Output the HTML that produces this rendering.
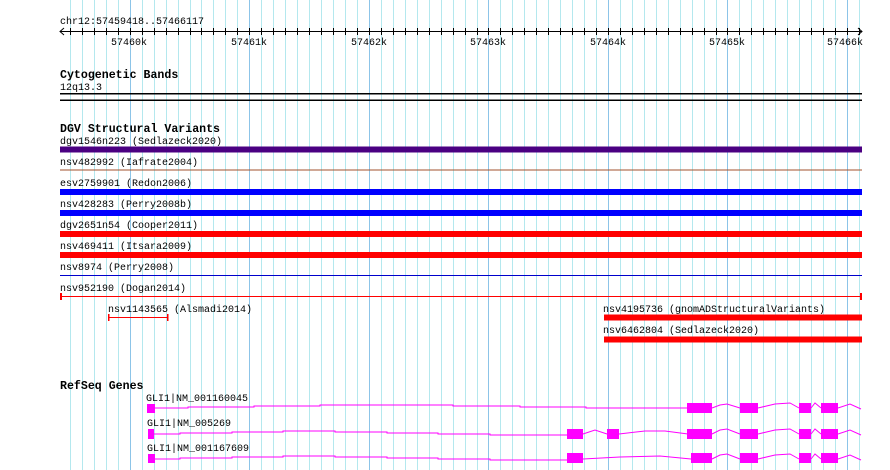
<!DOCTYPE html>
<html><head><meta charset="utf-8"><style>
html,body{margin:0;padding:0;background:#fff;width:890px;height:470px;overflow:hidden}
svg{display:block;position:absolute;left:0;top:0}
text{font-family:"Liberation Mono","DejaVu Sans Mono",monospace;font-size:10px;fill:#000}
.b{font-weight:bold;font-size:11.6px}
</style></head><body>
<svg width="890" height="470" xmlns="http://www.w3.org/2000/svg">
<g stroke="#b4e8ee" stroke-width="1">
<path d="M70.5 0V470M82.5 0V470M94.5 0V470M106.5 0V470M118.5 0V470
M142.5 0V470M154.5 0V470M166.5 0V470M178.5 0V470M190.5 0V470M201.5 0V470M213.5 0V470M225.5 0V470M237.5 0V470
M261.5 0V470M273.5 0V470M285.5 0V470M297.5 0V470M309.5 0V470M321.5 0V470M333.5 0V470M345.5 0V470M357.5 0V470
M381.5 0V470M393.5 0V470M405.5 0V470M417.5 0V470M429.5 0V470M441.5 0V470M453.5 0V470M465.5 0V470M477.5 0V470
M500.5 0V470M512.5 0V470M524.5 0V470M536.5 0V470M548.5 0V470M560.5 0V470M572.5 0V470M584.5 0V470M596.5 0V470
M620.5 0V470M632.5 0V470M644.5 0V470M656.5 0V470M668.5 0V470M680.5 0V470M692.5 0V470M704.5 0V470M716.5 0V470
M739.5 0V470M751.5 0V470M763.5 0V470M775.5 0V470M787.5 0V470M799.5 0V470M811.5 0V470M823.5 0V470M835.5 0V470
M859.5 0V470"/>
</g>
<g stroke="#8cc4e8" stroke-width="1">
<path d="M130.5 0V470M249.5 0V470M369.5 0V470M488.5 0V470M608.5 0V470M727.5 0V470M847.5 0V470"/>
</g>

<text x="60" y="24">chr12:57459418..57466117</text>
<line x1="60" y1="31.5" x2="862" y2="31.5" stroke="#000"/>
<polyline points="64,28 60,31.5 64,35" fill="none" stroke="#000"/>
<polyline points="858,28 862,31.5 858,35" fill="none" stroke="#000"/>
<g stroke="#000">
<path d="M70.5 28V35M82.5 28V35M94.5 28V35M106.5 28V35M118.5 28V35
M130.5 28V35M142.5 28V35M154.5 28V35M166.5 28V35M178.5 28V35M190.5 28V35M201.5 28V35M213.5 28V35M225.5 28V35M237.5 28V35
M249.5 28V35M261.5 28V35M273.5 28V35M285.5 28V35M297.5 28V35M309.5 28V35M321.5 28V35M333.5 28V35M345.5 28V35M357.5 28V35
M369.5 28V35M381.5 28V35M393.5 28V35M405.5 28V35M417.5 28V35M429.5 28V35M441.5 28V35M453.5 28V35M465.5 28V35M477.5 28V35
M488.5 28V35M500.5 28V35M512.5 28V35M524.5 28V35M536.5 28V35M548.5 28V35M560.5 28V35M572.5 28V35M584.5 28V35M596.5 28V35
M608.5 28V35M620.5 28V35M632.5 28V35M644.5 28V35M656.5 28V35M668.5 28V35M680.5 28V35M692.5 28V35M704.5 28V35M716.5 28V35
M727.5 28V35M739.5 28V35M751.5 28V35M763.5 28V35M775.5 28V35M787.5 28V35M799.5 28V35M811.5 28V35M823.5 28V35M835.5 28V35
M847.5 28V35M859.5 28V35"/>
</g>
<text x="129" y="45" text-anchor="middle">57460k</text>
<text x="249" y="45" text-anchor="middle">57461k</text>
<text x="369" y="45" text-anchor="middle">57462k</text>
<text x="488" y="45" text-anchor="middle">57463k</text>
<text x="608" y="45" text-anchor="middle">57464k</text>
<text x="727" y="45" text-anchor="middle">57465k</text>
<text x="845" y="45" text-anchor="middle">57466k</text>

<text class="b" x="60" y="78">Cytogenetic Bands</text>
<text x="60" y="90">12q13.3</text>
<rect x="60" y="93" width="802" height="1.5" fill="#000"/>
<rect x="60" y="99.5" width="802" height="1.5" fill="#000"/>

<text class="b" x="60" y="132">DGV Structural Variants</text>
<text x="60" y="144">dgv1546n223 (Sedlazeck2020)</text>
<rect x="60" y="146.5" width="802" height="6" fill="#4b0082"/>
<text x="60" y="165">nsv482992 (Iafrate2004)</text>
<rect x="60" y="169.5" width="802" height="1" fill="#a0522d"/>
<text x="60" y="186">esv2759901 (Redon2006)</text>
<rect x="60" y="189" width="802" height="6" fill="#0000ff"/>
<text x="60" y="207">nsv428283 (Perry2008b)</text>
<rect x="60" y="210" width="802" height="6" fill="#0000ff"/>
<text x="60" y="228">dgv2651n54 (Cooper2011)</text>
<rect x="60" y="231" width="802" height="6" fill="#ff0000"/>
<text x="60" y="249">nsv469411 (Itsara2009)</text>
<rect x="60" y="252" width="802" height="6" fill="#ff0000"/>
<text x="60" y="270">nsv8974 (Perry2008)</text>
<rect x="60" y="275" width="802" height="1" fill="#0000cc"/>
<text x="60" y="291">nsv952190 (Dogan2014)</text>
<rect x="60" y="296" width="802" height="1" fill="#ff0000"/>
<rect x="60" y="293" width="2" height="7" fill="#ff0000"/>
<rect x="860" y="293" width="2" height="7" fill="#ff0000"/>

<text x="108" y="312">nsv1143565 (Alsmadi2014)</text>
<rect x="108" y="317" width="60" height="1" fill="#ff0000"/>
<rect x="108" y="314" width="1.5" height="7" fill="#ff0000"/>
<rect x="167" y="314" width="1.5" height="7" fill="#ff0000"/>

<text x="603" y="312">nsv4195736 (gnomADStructuralVariants)</text>
<rect x="604" y="314.5" width="258" height="6" fill="#ff0000"/>
<text x="603" y="333">nsv6462804 (Sedlazeck2020)</text>
<rect x="604" y="336.5" width="258" height="6" fill="#ff0000"/>

<text class="b" x="60" y="389">RefSeq Genes</text>
<text x="146" y="401">GLI1|NM_001160045</text>
<text x="147" y="426">GLI1|NM_005269</text>
<text x="147" y="451">GLI1|NM_001167609</text>
<g fill="none" stroke="#ff00ff" stroke-width="1">
<polyline points="155,408 188,408 188,407 254,407 254,406 320,406 320,405 387,405 453,405 453,406 520,406 520,407 586,407 586,408 687,408"/>
<polyline points="712,408 720,405 727,404 740,408"/>
<polyline points="758,408 775,404 790,403 799,408"/>
<polyline points="811,408 815,403 821,408"/>
<polyline points="838,408 850,404 861,409"/>
<polyline points="154,434 180,434 180,433 232,433 232,432 283,432 283,431 335,431 335,432 387,432 387,433 438,433 438,434 490,434 490,435 567,435"/>
<polyline points="583,434 595,430 607,434"/>
<polyline points="619,434 645,431 665,431 688,434"/>
<polyline points="712,434 720,430 727,429 740,434"/>
<polyline points="758,434 775,430 790,429 799,434"/>
<polyline points="811,434 815,429 821,434"/>
<polyline points="838,434 850,430 861,435"/>
<polyline points="155,459 180,459 180,458 232,458 232,457 283,457 283,456 335,456 335,457 387,457 387,458 438,458 438,459 490,459 490,460 567,460"/>
<polyline points="583,459 620,457 660,456 691,459"/>
<polyline points="712,459 720,455 727,454 740,459"/>
<polyline points="758,459 775,455 790,454 799,459"/>
<polyline points="811,459 815,454 821,459"/>
<polyline points="838,459 850,455 861,460"/>
</g>
<g fill="#ff00ff">
<rect x="147" y="404" width="8" height="9"/>
<rect x="687" y="403" width="25" height="10"/>
<rect x="740" y="403" width="18" height="10"/>
<rect x="799" y="403" width="12" height="10"/>
<rect x="821" y="403" width="17" height="10"/>
<rect x="148" y="429" width="6" height="10"/>
<rect x="567" y="429" width="16" height="10"/>
<rect x="607" y="429" width="12" height="10"/>
<rect x="687" y="429" width="25" height="10"/>
<rect x="740" y="429" width="18" height="10"/>
<rect x="799" y="429" width="12" height="10"/>
<rect x="821" y="429" width="17" height="10"/>
<rect x="148" y="454" width="7" height="9"/>
<rect x="567" y="453" width="16" height="10"/>
<rect x="691" y="453" width="21" height="10"/>
<rect x="740" y="453" width="18" height="10"/>
<rect x="799" y="453" width="12" height="10"/>
<rect x="821" y="453" width="17" height="10"/>
</g>
</svg>
</body></html>
